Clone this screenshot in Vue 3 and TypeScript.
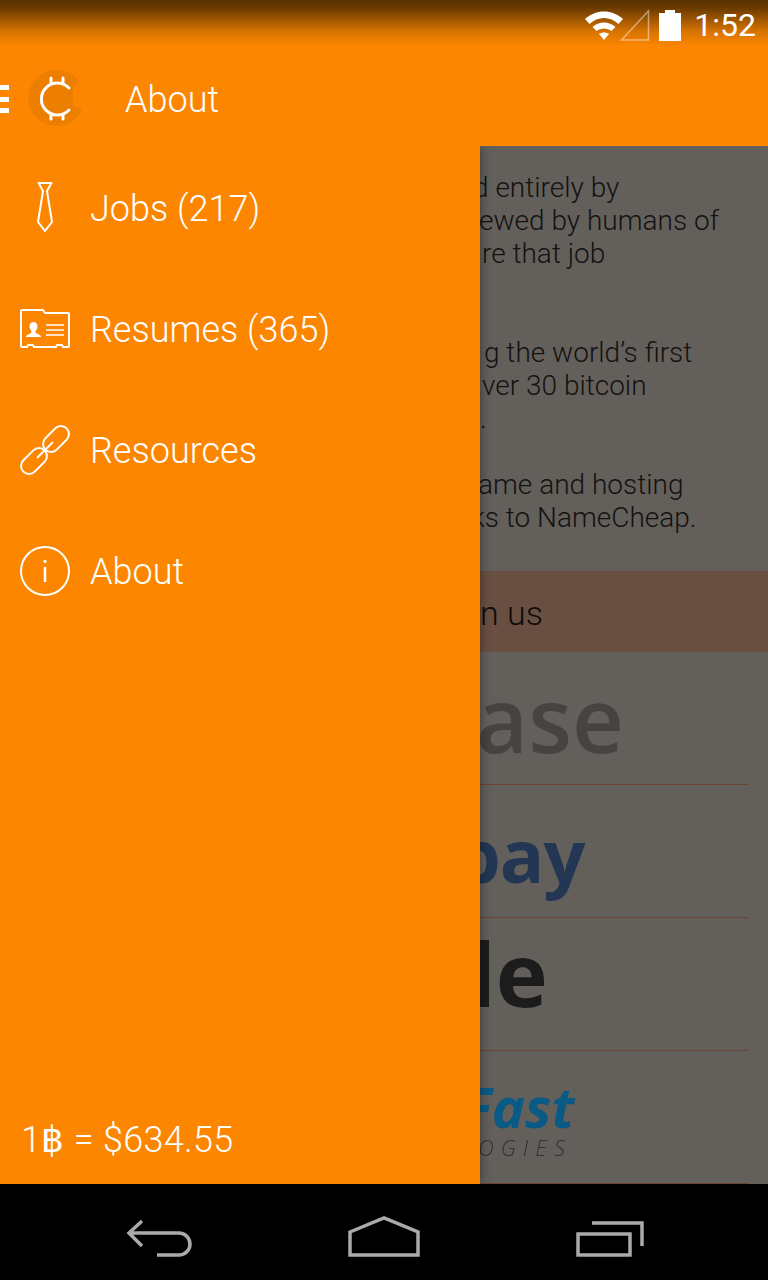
<script setup lang="ts">
const menu = [
  { icon: 'tie', label: 'Jobs (217)' },
  { icon: 'card', label: 'Resumes (365)' },
  { icon: 'link', label: 'Resources' },
  { icon: 'info', label: 'About' },
];

// the drawer covers the start of every line, so only the tail of the text is here
const paragraphs = [
  [
    { text: 'd entirely by', left: -7 },
    { text: 'ewed by humans of', left: -1 },
    { text: 're that job', left: 2 },
  ],
  [
    { text: 'g the world’s first', left: 4 },
    { text: 'ver 30 bitcoin', left: 2 },
    { text: '.', left: 0 },
  ],
  [
    { text: 'ame and hosting', left: -2 },
    { text: 'ks to NameCheap.', left: -9 },
  ],
];
</script>

<template>
  <div class="screen">
    <header class="top">
      <div class="status">
        <svg class="wifi" width="38" height="30" viewBox="0 0 38 30">
          <path d="M0 9 C11 -1 27 -1 38 9 L33.500 14 C25 6 13 6 4.500 14 Z" fill="#fff" />
          <path d="M7.500 17 C14 11 24 11 30.500 17 L26.500 21 C22 17.500 16 17.500 11.500 21 Z" fill="#fff" />
          <path d="M14 24 C17 22 21 22 24 24 L19 30 Z" fill="#fff" />
        </svg>
        <svg class="signal" width="30" height="32" viewBox="0 0 30 32">
          <path d="M28.500 2 V31 H1.500 Z" fill="none" stroke="#fff" stroke-opacity="0.45" stroke-width="1.500" />
        </svg>
        <svg class="battery" width="22" height="31" viewBox="0 0 22 31">
          <path d="M6 0 H16 V3 H22 V31 H0 V3 H6 Z" fill="#fff" />
        </svg>
        <span class="time">1:52</span>
      </div>
      <div class="action">
        <div class="burger"><i></i><i></i><i></i></div>
        <svg class="logo" width="56" height="56" viewBox="0 0 56 56">
          <path d="M28 0 A28 28 0 1 0 54 39 L45 36 V18 L51 11 A28 28 0 0 0 28 0 Z" fill="#ec7e00" />
          <path d="M41 18 A16 16 0 1 0 41 40" fill="none" stroke="#fff" stroke-width="3" stroke-linecap="round" />
          <path d="M23 8 V13 M35 8 V13 M23 45 V49 M35 45 V49" stroke="#fff" stroke-width="3" stroke-linecap="round" />
        </svg>
        <span class="title">About</span>
      </div>
    </header>

    <main class="body">
      <aside class="drawer">
        <ul class="menu">
          <li v-for="item in menu" :key="item.label" class="row">
            <span class="icon">
              <svg v-if="item.icon === 'tie'" width="50" height="52" viewBox="0 1 50 52">
                <path d="M18.500 2 H31.500 L27 10 L32 41 L25 50 L18 41 L23 10 Z" fill="none" stroke="#fff" stroke-width="2" stroke-linejoin="round" />
              </svg>
              <svg v-else-if="item.icon === 'card'" width="50" height="40" viewBox="0 0 50 40">
                <path d="M2 1 H23 L25 4 H48 Q49 4 49 5 V37 Q49 38 48 38 H43 L42 36 H37 L36 38 H14 L13 36 H8 L7 38 H2 Q1 38 1 37 V2 Q1 1 2 1 Z" fill="none" stroke="#fff" stroke-width="2" stroke-linejoin="round" />
                <path d="M13.500 13 C16 13 17.500 15 17.500 17.500 C17.500 20.500 15.500 21 15.500 23 C15.500 25 21 25 21 28 H6 C6 25 11.500 25 11.500 23 C11.500 21 9.500 20.500 9.500 17.500 C9.500 15 11 13 13.500 13 Z" fill="#fff" />
                <path d="M26 16 H44 M26 21 H44 M26 26 H44" stroke="#fff" stroke-width="1.500" />
              </svg>
              <svg v-else-if="item.icon === 'link'" width="50" height="50" viewBox="0 0 50 50">
                <g fill="none" stroke="#fff" stroke-width="2">
                  <rect x="21" y="6" width="30" height="16" rx="8" transform="rotate(-45 36 14)" />
                  <rect x="-1" y="28" width="30" height="16" rx="8" transform="rotate(-45 14 36)" />
                  <path d="M17 33 L33 17" />
                </g>
              </svg>
              <svg v-else width="50" height="50" viewBox="0 0 50 50">
                <circle cx="25" cy="25" r="24" fill="none" stroke="#fff" stroke-width="2" />
                <circle cx="25" cy="15.500" r="1.700" fill="#fff" />
                <path d="M25 21 V36" stroke="#fff" stroke-width="2.500" />
              </svg>
            </span>
            <span class="label">{{ item.label }}</span>
          </li>
        </ul>
        <div class="rate">1฿ = $634.55</div>
      </aside>

      <section class="content">
        <div class="copy">
          <p v-for="(lines, i) in paragraphs" :key="i">
            <span v-for="line in lines" :key="line.text" class="line" :style="{ marginLeft: line.left + 'px' }">{{ line.text }}</span>
          </p>
        </div>
        <div class="band"><span>n us</span></div>
        <div class="sponsor coinbase"><span>ase</span></div>
        <div class="sponsor bitpay"><span>pay</span></div>
        <div class="sponsor google"><span>le</span></div>
        <div class="sponsor fast">
          <span class="fast-name">Fast</span>
          <span class="fast-sub">OGIES</span>
        </div>
      </section>
    </main>

    <nav class="nav">
      <svg width="68" height="50" viewBox="0 0 68 50">
        <path d="M16 14 L3 26 L16 39 M3 26 H53 A11 11 0 0 1 53 48 H31" fill="none" stroke="#aaa" stroke-width="3.500" />
      </svg>
      <svg width="74" height="50" viewBox="0 0 74 50">
        <path d="M3 25 L37 11 L71 25 V48 H3 Z" fill="none" stroke="#aaa" stroke-width="3.500" />
      </svg>
      <svg width="72" height="50" viewBox="0 0 72 50">
        <path d="M6 27 H58 V48 H6 Z M20 16 H70 V39" fill="none" stroke="#aaa" stroke-width="3.500" />
      </svg>
    </nav>
  </div>
</template>

<style>
html,
body {
  margin: 0;
  background: #000;
}
</style>

<style scoped>
.screen {
  width: 768px;
  height: 1280px;
  display: flex;
  flex-direction: column;
  overflow: hidden;
  font-family: Roboto, "Liberation Sans", sans-serif;
  font-weight: 300;
}

.top {
  height: 146px;
  flex: none;
  color: #fff;
  background: linear-gradient(#593100 0, #6b3b00 8px, #d97400 32px, #fc8600 46px);
}

.status {
  height: 50px;
  display: flex;
  align-items: center;
  justify-content: flex-end;
  padding-right: 12px;
}

.wifi {
  margin-right: -3px;
}

.signal {
  margin-right: 9px;
}

.battery {
  margin-right: 13px;
}

.time {
  font-size: 32px;
  font-weight: 400;
}

.action {
  height: 96px;
  display: flex;
  align-items: center;
}

.burger {
  width: 9px;
  margin-top: 2px;
  display: flex;
  flex-direction: column;
  gap: 6.500px;
}

.burger i {
  height: 5px;
  background: #fff;
}

.logo {
  margin-left: 19px;
}

.title {
  margin: 4px 0 0 41px;
  font-size: 36px;
}

.body {
  flex: 1;
  display: flex;
  min-height: 0;
}

.drawer {
  width: 480px;
  flex: none;
  position: relative;
  z-index: 1;
  display: flex;
  flex-direction: column;
  justify-content: space-between;
  background: #fc8600;
  color: #fff;
  box-shadow: 0 0 10px rgba(0, 0, 0, 0.45);
  clip-path: inset(0 -14px 0 0);
}

.menu {
  list-style: none;
  margin: 1px 0 0;
  padding: 0;
}

.row {
  height: 121px;
  display: flex;
  align-items: center;
}

.icon {
  width: 50px;
  margin: 0 21px 0 20px;
  display: flex;
  justify-content: center;
}

.label {
  margin: 2px 0 0 -1px;
  font-size: 36px;
}

.rate {
  padding: 0 0 22px 21px;
  font-size: 36px;
  line-height: 43px;
  letter-spacing: 0.3px;
}

.content {
  flex: 1;
  min-width: 0;
  overflow: hidden;
  background: #63605c;
  color: #141210;
}

.copy {
  height: 425px;
  padding-top: 25px;
  box-sizing: border-box;
  font-size: 28px;
  line-height: 33px;
  white-space: nowrap;
}

.copy p {
  margin: 0 0 33px;
}

.copy p:first-child {
  margin-bottom: 66px;
}

.line {
  display: block;
}

.band {
  height: 81px;
  padding-top: 2px;
  box-sizing: border-box;
  display: flex;
  align-items: center;
  background: #694f41;
  color: #0f0c0a;
  font-size: 34px;
}

.sponsor {
  height: 133px;
  margin-right: 20px;
  box-sizing: border-box;
  border-bottom: 1px solid #6e4530;
  white-space: nowrap;
  font-family: "Open Sans", sans-serif;
  display: flex;
  align-items: center;
}

.sponsor span {
  filter: blur(0.5px);
}

.coinbase {
  color: #454442;
  font-size: 90px;
  font-weight: 600;
}

.coinbase span {
  margin-left: -4px;
}

.bitpay {
  padding-top: 6px;
  color: #233754;
  font-size: 74px;
  font-weight: 700;
  letter-spacing: -1px;
}

.bitpay span {
  margin-left: -26px;
}

.google {
  padding-bottom: 22px;
  color: #1c1c1c;
  font-size: 88px;
  font-weight: 700;
}

.google span {
  margin-left: -11px;
}

.fast {
  padding-top: 4px;
  flex-direction: column;
  align-items: flex-start;
  justify-content: center;
}

.fast-name {
  margin-left: -18px;
  color: #0a5a86;
  font-size: 56px;
  font-weight: 700;
  font-style: italic;
  line-height: 56px;
}

.fast-sub {
  margin-left: -2px;
  color: #33322f;
  font-size: 22px;
  font-weight: 300;
  font-style: italic;
  letter-spacing: 7px;
  line-height: 26px;
}

.nav {
  height: 96px;
  flex: none;
  background: #000;
  display: grid;
  grid-template-columns: repeat(3, 224px);
  justify-content: center;
  justify-items: center;
  align-items: center;
}
</style>
